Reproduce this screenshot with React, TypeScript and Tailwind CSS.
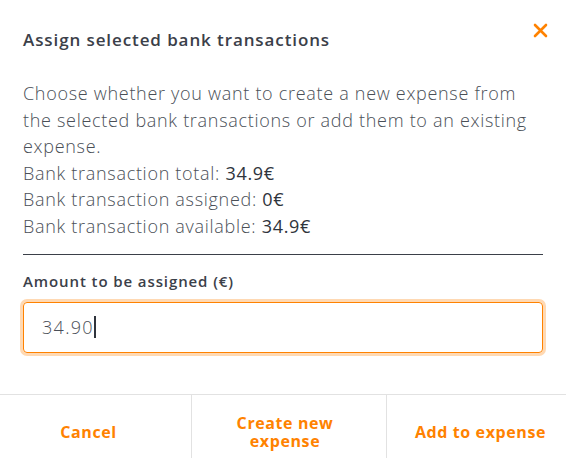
import React from "react";

export default function App() {
  const font = { fontFamily: '"Open Sans", "Liberation Sans", sans-serif' };
  return (
    <div className="relative w-[566px] h-[458px] overflow-hidden bg-white flex flex-col text-[#3b4049]" style={font}>
      <button className="absolute right-[18px] top-[22px] w-[16px] h-[16px] flex items-center justify-center" aria-label="close">
        <svg width="15" height="15" viewBox="0 0 15 15">
          <path d="M2 2 L13 13 M13 2 L2 13" stroke="#ff8200" strokeWidth="2.6" strokeLinecap="round" />
        </svg>
      </button>
      <div className="shrink-0 px-[23px] pt-[28px]">
        <h2 className="text-[17px] leading-[24px] font-semibold tracking-[0.9px] text-[#3b4049]">Assign selected bank transactions</h2>
      </div>
      <div className="shrink-0 px-[23px] pt-[28px] text-[18px] leading-[26.6px] font-light tracking-[0.7px] text-[#4a4f57]">
        <p>Choose whether you want to create a new expense from the selected bank transactions or add them to an existing expense.</p>
        <p>Bank transaction total: <span className="font-normal text-[#2f343c]">34.9€</span></p>
        <p>Bank transaction assigned: <span className="font-normal text-[#2f343c]">0€</span></p>
        <p>Bank transaction available: <span className="font-normal text-[#2f343c]">34.9€</span></p>
      </div>
      <div className="shrink-0 mx-[23px] mt-[14px] h-px bg-[#3b4049]" />
      <div className="shrink-0 px-[23px] pt-[16px]">
        <label className="block text-[15px] leading-[20px] font-semibold tracking-[0.9px] text-[#3b4049]">Amount to be assigned (€)</label>
        <div className="mt-[11px] h-[51px] rounded-[4px] border border-[#ff8200] ring-[3px] ring-[#ffd9b3] flex items-center px-[18px]">
          <span className="text-[18px] font-light tracking-[1.3px] text-[#4a4f57]">34.90</span>
          <span className="w-[2px] h-[22px] bg-[#2f343c]" />
        </div>
      </div>
      <div className="shrink-0 mt-[41px] h-[76px] border-t border-[#e2e2e2] flex text-[#ff8200] font-bold text-[16px] leading-[18px] tracking-[0.6px]">
        <div className="w-[191px] pr-[14px] flex items-center justify-center">Cancel</div>
        <div className="w-[195px] pr-[8px] border-l border-[#e2e2e2] flex items-center justify-center text-center">Create new<br />expense</div>
        <div className="flex-1 pl-[8px] border-l border-[#e2e2e2] flex items-center justify-center">Add to expense</div>
      </div>
    </div>
  );
}
